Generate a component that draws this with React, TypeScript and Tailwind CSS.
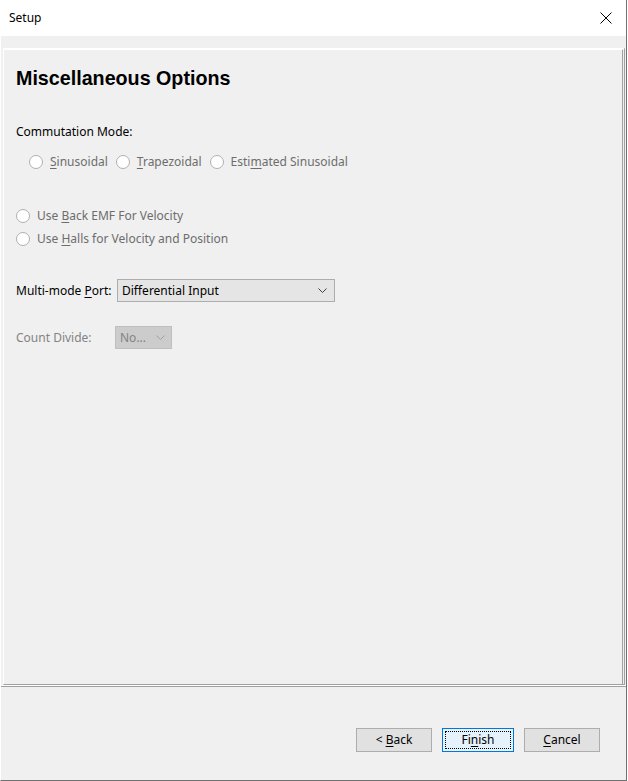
import React from "react";

const ui = { fontFamily: '"Noto Sans", "Open Sans", sans-serif' };

function Radio({ label, mnemonic }: { label: string; mnemonic: number }) {
  return (
    <div className="flex items-center gap-[7px]">
      <span className="h-[14px] w-[14px] shrink-0 rounded-full border border-[#b0b0b0] bg-white" />
      <span className="text-[12px] leading-[16px] text-[#6d6d6d]">
        {label.slice(0, mnemonic)}
        <span className="underline underline-offset-2">{label[mnemonic]}</span>
        {label.slice(mnemonic + 1)}
      </span>
    </div>
  );
}

function Chevron({ color }: { color: string }) {
  return (
    <svg width="9" height="5" viewBox="0 0 9 5" fill="none">
      <path d="M0.5 0.5 L4.5 4.5 L8.5 0.5" stroke={color} strokeWidth="1" />
    </svg>
  );
}

export default function App() {
  return (
    <div className="h-[781px] w-[628px] bg-white" style={ui}>
      <div className="flex h-[781px] w-[627px] flex-col border-r border-b border-l border-r-[#707070] border-b-[#707070] border-l-white bg-[#f0f0f0]">
        {/* title bar */}
        <div className="flex h-[36px] shrink-0 items-center justify-between bg-white pl-[8px] pr-[14px]">
          <span className="text-[12px] text-black">Setup</span>
          <svg width="12" height="12" viewBox="0 0 12 12">
            <path d="M0.5 0.5 L11.5 11.5 M11.5 0.5 L0.5 11.5" stroke="#000" strokeWidth="1" />
          </svg>
        </div>
        <div className="h-[12px] shrink-0 bg-[#f0f0f0]" />

        {/* page panel */}
        <div className="ml-[2px] mr-[1px] flex h-[637px] shrink-0 flex-col border-t-2 border-r-[3px] border-b border-l border-t-white border-r-[#a0a0a0] border-b-[#a0a0a0] border-l-white bg-[#f0f0f0] pl-[12px] [border-right-style:double]">
          <h1
            className="mt-[17px] text-[19.7px] font-bold leading-[23px] text-black"
            style={{ fontFamily: '"Liberation Sans", Arial, sans-serif' }}
          >
            Miscellaneous Options
          </h1>

          <div className="mt-[34px] text-[12px] leading-[16px] text-black">Commutation Mode:</div>

          <div className="mt-[14px] ml-[13px] flex items-center gap-[8px]">
            <Radio label="Sinusoidal" mnemonic={0} />
            <Radio label="Trapezoidal" mnemonic={0} />
            <Radio label="Estimated Sinusoidal" mnemonic={4} />
          </div>

          <div className="mt-[38px]">
            <Radio label="Use Back EMF For Velocity" mnemonic={4} />
          </div>
          <div className="mt-[7px]">
            <Radio label="Use Halls for Velocity and Position" mnemonic={4} />
          </div>

          <div className="mt-[32px] flex items-center">
            <span className="w-[101px] text-[12px] leading-[16px] text-black">
              Multi-mode <span className="underline underline-offset-2">P</span>ort:
            </span>
            <div className="flex h-[23px] w-[218px] items-center justify-between border border-[#adadad] bg-[#e5e5e5] pr-[7px] pl-[4px]">
              <span className="text-[12px] text-black">Differential Input</span>
              <Chevron color="#404040" />
            </div>
          </div>

          <div className="mt-[24px] flex items-center">
            <span className="w-[99px] text-[12px] leading-[16px] text-[#838383]">Count Divide:</span>
            <div className="flex h-[23px] w-[57px] items-center justify-between border border-[#bfbfbf] bg-[#cccccc] pr-[6px] pl-[4px]">
              <span className="text-[12px] text-[#838383]">No...</span>
              <Chevron color="#a0a0a0" />
            </div>
          </div>
        </div>

        {/* separator */}
        <div className="h-[2px] shrink-0 border-t border-b border-t-white border-b-[#a0a0a0]" />

        {/* button bar */}
        <div className="flex flex-1 items-start justify-end gap-[10px] pt-[41px] pr-[26px]">
          <button className="flex h-[24px] w-[76px] items-center justify-center border border-[#adadad] bg-[#e1e1e1] text-[12px] text-black">
            &lt;&nbsp;<span className="underline underline-offset-2">B</span>ack
          </button>
          <button className="relative flex h-[24px] w-[72px] items-center justify-center border border-[#0078d7] bg-[#e5f1fb] text-[12px] text-black">
            <span className="absolute inset-[2px] border border-dotted border-black" />
            Fi<span className="underline underline-offset-2">n</span>ish
          </button>
          <button className="flex h-[24px] w-[76px] items-center justify-center border border-[#adadad] bg-[#e1e1e1] text-[12px] text-black">
            <span className="underline underline-offset-2">C</span>ancel
          </button>
        </div>
      </div>
    </div>
  );
}
